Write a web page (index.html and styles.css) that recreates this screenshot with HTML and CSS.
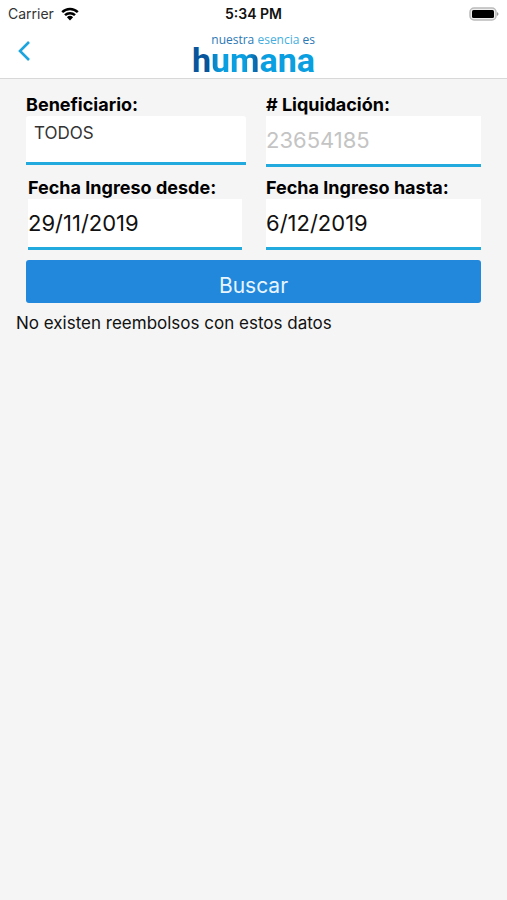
FILE: index.html
```
<!DOCTYPE html>
<html lang="es">
<head>
  <meta charset="UTF-8">
  <meta name="viewport" content="width=device-width, initial-scale=1.0">
  <title>Reembolsos</title>
  <link rel="stylesheet" href="styles.css">
</head>
<body>
  <header class="header">
    <div class="status">
      <div class="carrier">
        <span>Carrier</span>
        <svg class="wifi" viewBox="0 0 18 14" aria-hidden="true">
          <path d="M1.2 5.2a11.2 11.2 0 0 1 15.6 0M4 8.2a7.2 7.2 0 0 1 10 0" fill="none" stroke="#000" stroke-width="2.5"/>
          <path d="M5.9 10.2a4.5 4.5 0 0 1 6.2 0L9 13.4z"/>
        </svg>
      </div>
      <span class="time">5:34 PM</span>
      <div class="power">
        <svg class="battery" viewBox="0 0 30 14" aria-hidden="true">
          <rect x="1" y="1" width="26" height="12" rx="4" fill="#eee" stroke="#bbb" stroke-width="1.5"/>
          <rect x="3" y="3" width="22" height="8" rx="1.5"/>
          <path d="M28 5q3 2 0 4z" fill="#999"/>
        </svg>
      </div>
    </div>
    <nav class="nav">
      <a class="back" href="#" aria-label="Volver">
        <svg viewBox="0 0 12 20" aria-hidden="true">
          <path d="M11 1L2 10l9 9" fill="none" stroke="#1ba4dd" stroke-width="2.6"/>
        </svg>
      </a>
      <div class="logo">
        <span class="slogan">nuestra <span class="light">esencia</span> es</span>
        <span class="brand"><span class="brand-h">h</span><span class="brand-u">u</span><span class="brand-m">m</span>ana</span>
      </div>
    </nav>
  </header>

  <main>
    <form action="#" class="search">
      <div class="fields">
        <div class="field">
          <label for="beneficiario">Beneficiario:</label>
          <select id="beneficiario">
            <option>TODOS</option>
          </select>
        </div>
        <div class="field">
          <label for="liquidacion"># Liquidación:</label>
          <input type="text" id="liquidacion" placeholder="23654185">
        </div>
        <div class="field field-inset">
          <label for="desde">Fecha Ingreso desde:</label>
          <input type="text" id="desde" value="29/11/2019">
        </div>
        <div class="field">
          <label for="hasta">Fecha Ingreso hasta:</label>
          <input type="text" id="hasta" value="6/12/2019">
        </div>
      </div>
      <button type="submit" class="btn">Buscar</button>
    </form>
    <p class="message">No existen reembolsos con estos datos</p>
  </main>
</body>
</html>
```
FILE: styles.css
```
:root {
  --clr-cyan: #22aade;
  --clr-lightblue: #0a9fe0;
  --clr-darkblue: #07559b;
  --clr-button: #2288dc;
  --clr-bg: #f5f5f5;
}

* {
  padding: 0;
  margin: 0;
  box-sizing: border-box;
}

body {
  min-height: 100vh;
  background-color: var(--clr-bg);
  color: #111;
  font-family: Inter, Roboto, sans-serif;
}

.header {
  background-color: #fff;
  border-bottom: 1px solid #d8d8d8;
}

/* status bar */
.status {
  display: grid;
  grid-template-columns: 1fr auto 1fr;
  align-items: center;
  height: 27px;
  padding: 0 8px;
  font-size: 14px;
  line-height: 27px;
}

.carrier {
  display: flex;
  align-items: center;
  gap: 7px;
  color: #333;
}

.wifi {
  width: 18px;
  height: 14px;
}

.time {
  font-weight: 600;
}

.power {
  display: flex;
  justify-content: flex-end;
}

.battery {
  width: 30px;
  height: 14px;
}

/* navigation */
.nav {
  display: grid;
  grid-template-columns: 1fr auto 1fr;
  align-items: center;
  height: 51px;
  padding: 0 18px 3px;
}

.back svg {
  display: block;
  width: 12px;
  height: 20px;
}

.logo {
  display: flex;
  flex-direction: column;
  align-items: flex-end;
  padding-top: 6px;
  color: var(--clr-lightblue);
}

.slogan {
  color: #2b78b5;
  font-family: "Open Sans", sans-serif;
  font-size: 12px;
  line-height: 12px;
}

.light {
  color: #45aede;
}

.brand {
  font-family: Roboto, sans-serif;
  font-size: 34px;
  font-weight: 700;
  line-height: 28px;
}

.brand-h {
  color: var(--clr-darkblue);
}

.brand-u,
.brand-m {
  background: linear-gradient(90deg, var(--clr-lightblue) 50%, var(--clr-darkblue));
  background-clip: text;
  -webkit-background-clip: text;
  color: transparent;
}

.brand-u {
  background-image: linear-gradient(90deg, #087cc0, var(--clr-lightblue) 60%);
}

/* search form */
.search {
  padding: 15px 26px 0;
}

.fields {
  display: grid;
  grid-template-columns: 220fr 215fr;
  gap: 10px 20px;
  margin-bottom: 10px;
}

.field {
  display: flex;
  flex-direction: column;
}

.field-inset {
  padding: 0 4px 0 2px;
}

label {
  color: #000;
  font-size: 18px;
  font-weight: 700;
  line-height: 22px;
}

input,
select {
  width: 100%;
  height: 51px;
  background-color: #fff;
  border: 0;
  border-bottom: 3px solid var(--clr-cyan);
  border-radius: 0;
  color: #111;
  font-family: inherit;
  font-size: 22px;
  appearance: none;
}

select {
  height: 49px;
  padding: 0 8px 12px;
  border-radius: 3px 3px 0 0;
  color: #333;
  font-size: 17px;
}

input::placeholder {
  color: #c4c4c4;
}

.btn {
  display: block;
  width: 100%;
  height: 43px;
  padding-top: 7px;
  background-color: var(--clr-button);
  border: 0;
  border-radius: 3px;
  color: #e8f5ff;
  font-family: inherit;
  font-size: 21px;
}

.message {
  padding: 10px 16px;
  font-size: 17px;
  line-height: 20px;
}
```
